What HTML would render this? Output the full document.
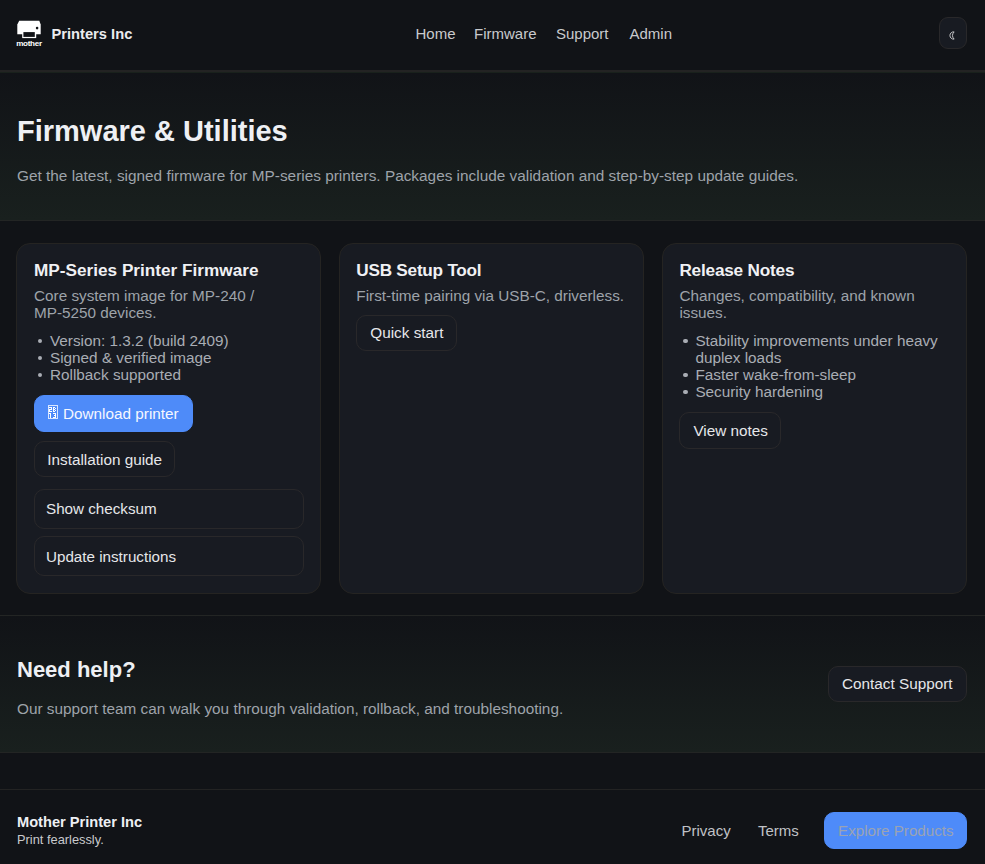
<!DOCTYPE html>
<html><head><meta charset="utf-8">
<style>
*{box-sizing:border-box;margin:0;padding:0}
html,body{width:985px;height:864px;overflow:hidden;background:#111317;font-family:"Liberation Sans",sans-serif;color:#e8e8ea}
.abs{position:absolute}
header{position:absolute;left:0;top:0;width:985px;height:72px;background:#111317;border-bottom:2px solid #232323}
.logo{position:absolute;left:0;top:0;width:50px;height:50px}
.brand{position:absolute;left:51.5px;top:25.7px;font-size:14.7px;font-weight:bold;color:#ececef;white-space:nowrap}
.nav a{position:absolute;top:25px;font-size:15px;color:#c9cacd;text-decoration:none;white-space:nowrap}
.toggle{position:absolute;left:939px;top:17px;width:28px;height:32px;border:1px solid #29282a;background:#181b22;border-radius:9px;color:#e0e0e0;font-size:12px;text-align:center;line-height:30px;padding-top:3px}
.hero{position:absolute;left:0;top:72px;width:985px;height:149px;border-top:1px solid #19211c;border-bottom:1px solid #232524;background:linear-gradient(180deg,#111317 0%,#19201e 100%)}
.hero h1{position:absolute;left:17px;top:42px;font-size:29px;font-weight:bold;color:#eef0f4;white-space:nowrap}
.hero p{position:absolute;left:17px;top:94px;font-size:15.37px;color:#9ea3aa;white-space:nowrap}
.card{position:absolute;top:243px;width:305px;height:351px;background:#181b22;border:1px solid #252422;border-radius:14px}
.card h3{position:absolute;left:17px;top:16.3px;font-size:17.2px;font-weight:bold;color:#f0f1f4;white-space:nowrap}
.card .desc{position:absolute;left:17px;top:43px;width:270px;font-size:15.3px;line-height:17px;color:#9ea3aa}
.card ul{position:absolute;left:17px;list-style:none;font-size:15.3px;line-height:17px;color:#a9adb4}
.card li{position:relative;padding-left:16px}
.card li:before{content:"";position:absolute;left:3.8px;top:6.5px;width:4.6px;height:4.6px;border-radius:50%;background:#a9adb4}
.btn{position:absolute;height:36px;border:1px solid #29282a;background:transparent;border-radius:10px;font-size:15px;color:#e6e7ea;line-height:34px;padding-left:13px;white-space:nowrap}
.primary{background:#4e8bf9;border-color:#4e8bf9;color:#f5f7ff}
.help{position:absolute;left:0;top:615px;width:985px;height:138px;border-top:1px solid #232524;border-bottom:1px solid #232524;background:linear-gradient(180deg,#111317 0%,#19201e 100%)}
.help h2{position:absolute;left:17px;top:41px;font-size:22px;font-weight:bold;color:#eef0f4;white-space:nowrap}
.help p{position:absolute;left:17px;top:84px;font-size:15.34px;color:#9ea3aa;white-space:nowrap}
footer{position:absolute;left:0;top:789px;width:985px;height:75px;border-top:1px solid #232323;background:#111317}
</style></head><body>
<header>
  <svg class="logo" viewBox="0 0 50 50">
    <path d="M19.2 20.8 L39.3 20.8 L40.7 24.6 L40.7 34.3 L17.3 34.3 L17.3 24.6 Z" fill="#fff"/>
    <rect x="22.2" y="30" width="14" height="8.1" fill="#fff"/>
    <rect x="23.4" y="32.1" width="11.4" height="4.8" fill="#111317"/>
    <circle cx="37.1" cy="28.1" r="1.3" fill="#111317"/>
    <text x="29" y="45.8" font-family="Liberation Sans" font-weight="bold" font-size="8.1" fill="#fff" text-anchor="middle" letter-spacing="-0.3">mother</text>
  </svg>
  <div class="brand">Printers Inc</div>
  <nav class="nav">
    <a style="left:415.5px">Home</a>
    <a style="left:474px">Firmware</a>
    <a style="left:556px">Support</a>
    <a style="left:629.5px">Admin</a>
  </nav>
  <div class="toggle"><svg style="position:absolute;left:6px;top:11px" width="12" height="14" viewBox="0 0 12 14"><path d="M8.1 2.9 A3.64 3.64 0 1 0 8.1 10.1 A5.33 5.33 0 0 1 8.1 2.9 Z" fill="none" stroke="#d4d4d6" stroke-width="0.9" stroke-linejoin="round"/></svg></div>
</header>
<section class="hero">
  <h1>Firmware &amp; Utilities</h1>
  <p>Get the latest, signed firmware for MP-series printers. Packages include validation and step-by-step update guides.</p>
</section>

<div class="card" style="left:16px">
  <h3>MP-Series Printer Firmware</h3>
  <div class="desc">Core system image for MP-240 /<br>MP-5250 devices.</div>
  <ul style="top:88px">
    <li>Version: 1.3.2 (build 2409)</li>
    <li>Signed &amp; verified image</li>
    <li>Rollback supported</li>
  </ul>
  <div class="btn primary" style="left:17px;top:151px;width:159px;height:37px;line-height:35px;padding-left:28px;font-size:15.3px"><svg style="position:absolute;left:13px;top:9px" width="10" height="14" viewBox="0 0 10 14"><rect x="0.5" y="0.5" width="9" height="13" fill="none" stroke="#d9e6ff" stroke-width="1"/><g fill="#fff"><rect x="1" y="2" width="1" height="1"/><rect x="2" y="2" width="1" height="1"/><rect x="3" y="2" width="1" height="1"/><rect x="3" y="3" width="1" height="1"/><rect x="1" y="4" width="1" height="1"/><rect x="2" y="4" width="1" height="1"/><rect x="3" y="4" width="1" height="1"/><rect x="1" y="5" width="1" height="1"/><rect x="1" y="6" width="1" height="1"/><rect x="2" y="6" width="1" height="1"/><rect x="3" y="6" width="1" height="1"/><rect x="5" y="2" width="1" height="1"/><rect x="6" y="2" width="1" height="1"/><rect x="5" y="3" width="1" height="1"/><rect x="7" y="3" width="1" height="1"/><rect x="5" y="4" width="1" height="1"/><rect x="6" y="4" width="1" height="1"/><rect x="5" y="5" width="1" height="1"/><rect x="7" y="5" width="1" height="1"/><rect x="5" y="6" width="1" height="1"/><rect x="6" y="6" width="1" height="1"/><rect x="1" y="8" width="1" height="1"/><rect x="2" y="8" width="1" height="1"/><rect x="2" y="9" width="1" height="1"/><rect x="2" y="10" width="1" height="1"/><rect x="2" y="11" width="1" height="1"/><rect x="2" y="12" width="1" height="1"/><rect x="5" y="8" width="1" height="1"/><rect x="6" y="8" width="1" height="1"/><rect x="7" y="8" width="1" height="1"/><rect x="7" y="9" width="1" height="1"/><rect x="6" y="10" width="1" height="1"/><rect x="7" y="10" width="1" height="1"/><rect x="7" y="11" width="1" height="1"/><rect x="5" y="12" width="1" height="1"/><rect x="6" y="12" width="1" height="1"/><rect x="7" y="12" width="1" height="1"/></g></svg>Download printer</div>
  <div class="btn" style="left:17px;top:197px;width:140.5px;line-height:35px;padding-left:12.3px;font-size:15.3px">Installation guide</div>
  <div class="btn" style="left:17px;top:245px;width:270px;height:40px;line-height:38px;padding-left:11px;font-size:15.2px">Show checksum</div>
  <div class="btn" style="left:17px;top:292px;width:270px;height:40px;line-height:39px;padding-left:11px;font-size:15.2px">Update instructions</div>
</div>

<div class="card" style="left:339px">
  <h3 style="left:16.3px;letter-spacing:-0.25px">USB Setup Tool</h3>
  <div class="desc" style="left:16.3px">First-time pairing via USB-C, driverless.</div>
  <div class="btn" style="left:16.3px;top:71px;width:100.5px;height:35.5px;line-height:33px;font-size:15.3px">Quick start</div>
</div>

<div class="card" style="left:662px">
  <h3 style="left:16.4px;letter-spacing:-0.2px">Release Notes</h3>
  <div class="desc" style="left:16.4px">Changes, compatibility, and known<br>issues.</div>
  <ul style="top:88px;left:16.4px">
    <li>Stability improvements under heavy<br>duplex loads</li>
    <li>Faster wake-from-sleep</li>
    <li>Security hardening</li>
  </ul>
  <div class="btn" style="left:16.4px;top:168px;width:102px;height:36.5px;line-height:36px;font-size:15.3px">View notes</div>
</div>

<section class="help">
  <h2>Need help?</h2>
  <p>Our support team can walk you through validation, rollback, and troubleshooting.</p>
  <div class="btn" style="left:828px;top:50px;width:139px;background:#181b22;font-size:15.3px">Contact Support</div>
</section>

<footer>
  <div class="abs" style="left:17px;top:23.5px;font-size:14.64px;font-weight:bold;color:#eef0f4;white-space:nowrap">Mother Printer Inc</div>
  <div class="abs" style="left:17px;top:41.8px;font-size:12.84px;color:#c9cacd;white-space:nowrap">Print fearlessly.</div>
  <div class="abs" style="left:681.5px;top:32px;font-size:15px;color:#c0c2c6">Privacy</div>
  <div class="abs" style="left:758px;top:32px;font-size:15px;color:#c0c2c6">Terms</div>
  <div class="btn primary" style="left:824px;top:22px;width:143px;height:37px;line-height:35px;color:#9aa3b3;font-size:15.2px">Explore Products</div>
</footer>
</body></html>
